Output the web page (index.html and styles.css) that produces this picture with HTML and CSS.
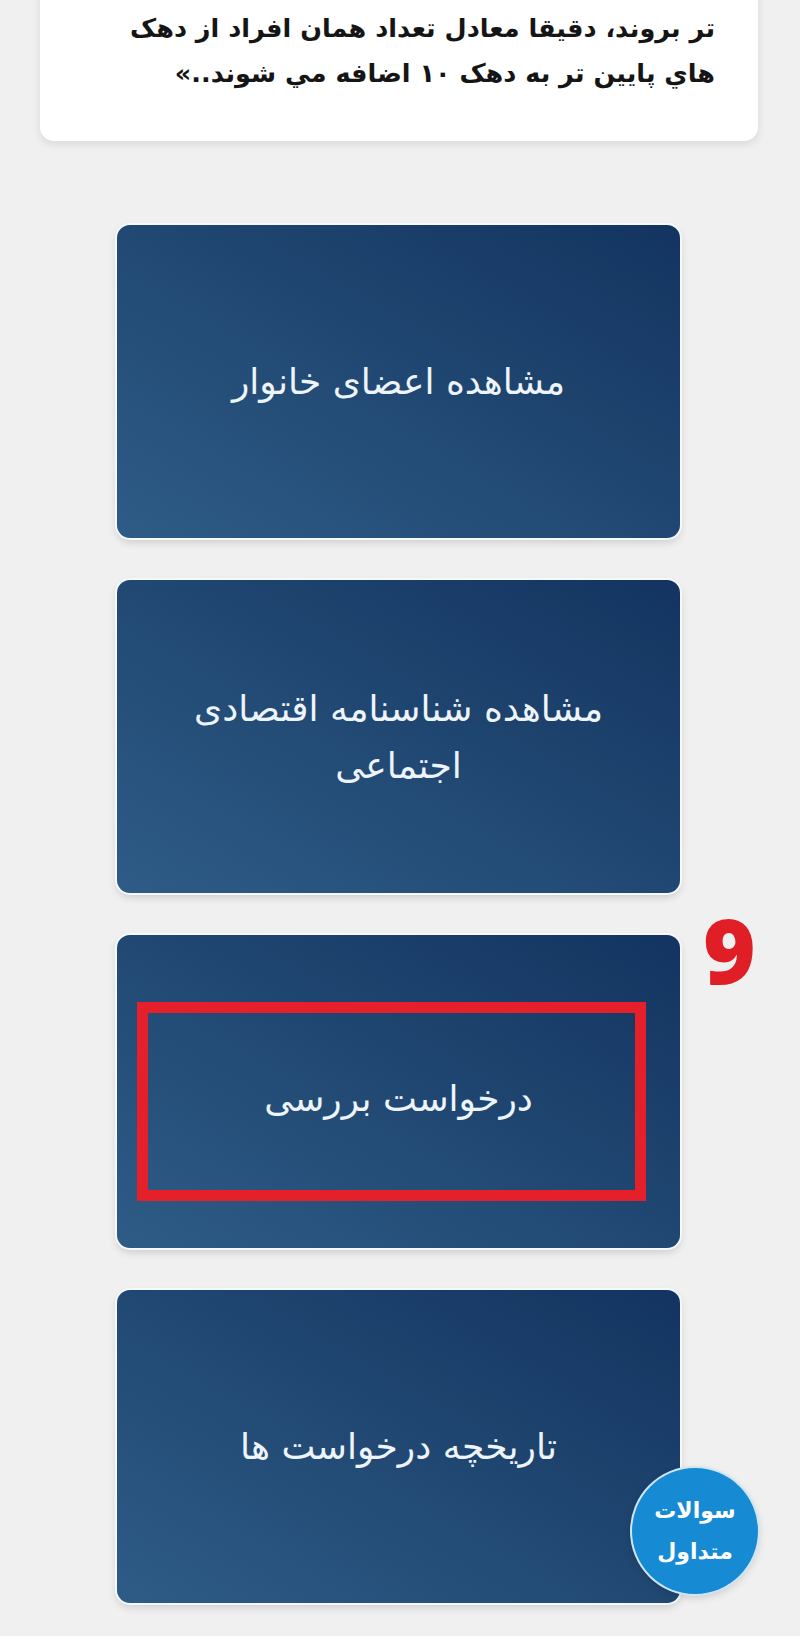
FILE: index.html
```html
<!DOCTYPE html>
<html lang="fa" dir="rtl">
<head>
<meta charset="utf-8">
<title>خدمات</title>
<link rel="stylesheet" href="styles.css">
</head>
<body>
<div class="page">
  <div class="info-card">
    <p class="info-text">به این ترتیب اگر افرادی از دهک های بالا به پایین<br>تر بروند، دقیقا معادل تعداد همان افراد از دهک<br>هاي پايين تر به دهک ۱۰ اضافه مي شوند..»</p>
  </div>

  <div class="menu">
    <a class="tile"><span class="tile-label">مشاهده اعضای خانوار</span></a>
    <a class="tile"><span class="tile-label">مشاهده شناسنامه اقتصادی<br>اجتماعی</span></a>
    <a class="tile tile-marked">
      <span class="tile-label">درخواست بررسی</span>
      <span class="mark-box"></span>
      <span class="mark-num">9</span>
    </a>
    <a class="tile"><span class="tile-label">تاریخچه درخواست ها</span></a>
  </div>

  <a class="faq">سوالات<br>متداول</a>
</div>
</body>
</html>
```

FILE: styles.css
```css
* { box-sizing: border-box; }

html, body {
  margin: 0;
  padding: 0;
  background: #f0f0f0;
}

body {
  font-family: "DejaVu Sans", "Noto Sans", sans-serif;
  width: 800px;
  height: 1636px;
  overflow: hidden;
}

.page {
  position: relative;
  display: flow-root;
  width: 800px;
  height: 1636px;
}

.info-card {
  margin: -69px 42px 0 40px;
  padding: 30px 43px 45px 43px;
  background: #ffffff;
  border-radius: 0 0 14px 14px;
  box-shadow: 0 3px 8px rgba(0, 0, 0, 0.10);
}

.info-text {
  margin: 0;
  font-size: 25.5px;
  line-height: 45px;
  font-weight: bold;
  color: #151515;
  text-align: right;
  white-space: nowrap;
}

.menu {
  display: flex;
  flex-direction: column;
  gap: 42px;
  margin: 84px 120px 0 117px;
}

.tile {
  position: relative;
  display: flex;
  align-items: center;
  justify-content: center;
  height: 313px;
  border-radius: 13px;
  background: linear-gradient(210deg, #133460 0%, #1f4670 45%, #2e5c87 100%);
  box-shadow: 0 0 0 2px #f6f9fc, 0 4px 9px rgba(0, 0, 0, 0.16);
  text-decoration: none;
}

.tile-label {
  color: #eef4fb;
  font-size: 36px;
  line-height: 57px;
  text-align: center;
}

.tile-marked .tile-label {
  margin-top: 14px;
}

.mark-box {
  position: absolute;
  left: 20px;
  right: 34px;
  top: 67px;
  bottom: 47px;
  border: 11px solid #e5202a;
}

.mark-num {
  position: absolute;
  left: 586px;
  top: -41px;
  font-family: "Open Sans", "DejaVu Sans", sans-serif;
  font-weight: 800;
  font-size: 90px;
  line-height: 110px;
  color: #e01e25;
}

.faq {
  position: absolute;
  left: 632px;
  top: 1468px;
  width: 126px;
  height: 126px;
  border-radius: 50%;
  background: #168ad3;
  box-shadow: 0 0 0 2px #cfe6f7, 0 3px 8px rgba(0, 0, 0, 0.18);
  color: #ffffff;
  font-size: 22px;
  font-weight: bold;
  line-height: 41px;
  display: flex;
  align-items: center;
  justify-content: center;
  text-align: center;
}
```
